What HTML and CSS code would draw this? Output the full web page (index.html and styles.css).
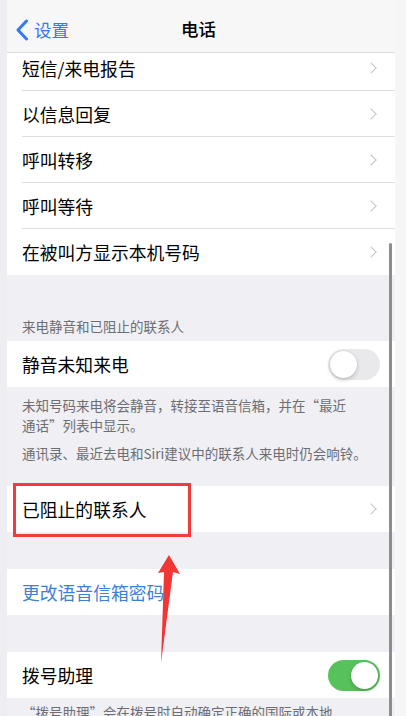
FILE: index.html
```html
<!DOCTYPE html>
<html lang="zh-CN">
<head>
<meta charset="utf-8">
<title>电话</title>
<link rel="stylesheet" href="styles.css">
</head>
<body>
<div class="page">
  <header class="nav">
    <a class="back">
      <svg class="back-icon" width="14" height="22" viewBox="0 0 14 22"><path d="M11.5 2 L3 11 L11.5 20" fill="none" stroke="#3478f6" stroke-width="3" stroke-linecap="round" stroke-linejoin="round"/></svg>
      <span>设置</span>
    </a>
    <h1 class="title">电话</h1>
  </header>

  <section class="group first">
    <div class="row"><span class="label">短信/来电报告</span><i class="chev"></i></div>
    <div class="row"><span class="label">以信息回复</span><i class="chev"></i></div>
    <div class="row"><span class="label">呼叫转移</span><i class="chev"></i></div>
    <div class="row"><span class="label">呼叫等待</span><i class="chev"></i></div>
    <div class="row last"><span class="label">在被叫方显示本机号码</span><i class="chev"></i></div>
  </section>

  <div class="section-head">来电静音和已阻止的联系人</div>
  <section class="group">
    <div class="row last"><span class="label">静音未知来电</span><span class="switch"><span class="knob"></span></span></div>
  </section>
  <div class="section-foot">
    <p>未知号码来电将会静音，转接至语音信箱，并在“最近<br>通话”列表中显示。</p>
    <p>通讯录、最近去电和Siri建议中的联系人来电时仍会响铃。</p>
  </div>

  <section class="group">
    <div class="row last"><span class="label">已阻止的联系人</span><i class="chev"></i></div>
  </section>

  <div class="gap"></div>
  <section class="group">
    <div class="row last"><span class="label link">更改语音信箱密码</span></div>
  </section>

  <div class="gap"></div>
  <section class="group">
    <div class="row last"><span class="label">拨号助理</span><span class="switch on"><span class="knob"></span></span></div>
  </section>
  <div class="section-foot tail">
    <p>“拨号助理”会在拨号时自动确定正确的国际或本地</p>
  </div>

  <div class="scrollbar"></div>
  <div class="highlight"></div>
  <svg class="arrow" width="40" height="120" viewBox="0 0 40 120">
    <polygon points="20,0 31,19 24,17 12,108 15,17 9,18" fill="#f23535"/>
  </svg>
</div>
</body>
</html>
```

FILE: styles.css
```css
* { box-sizing: border-box; }

html, body {
  margin: 0;
  padding: 0;
  height: 716px;
  overflow: hidden;
  background: #f6f6f8;
}

body {
  font-family: "Noto Sans CJK SC", "Noto Sans", sans-serif;
  color: #000;
}

.page {
  position: relative;
  width: 395px;
  height: 716px;
  border-left: 7px solid #eeeef2;
  background: #efeff4;
  overflow: hidden;
}

/* navigation bar floats over the scrolled list */
.nav {
  position: sticky;
  top: 0;
  z-index: 2;
  height: 53px;
  display: flex;
  align-items: center;
  justify-content: center;
  background: #f7f7f8;
  border-bottom: 1px solid #dcdce0;
}

.back {
  position: absolute;
  left: 8px;
  top: 19px;
  display: flex;
  align-items: center;
  gap: 5px;
  color: #3478f6;
  font-size: 17.5px;
  line-height: 22px;
}

.back-icon { display: block; }

.title {
  margin: 0;
  font-size: 17.5px;
  font-weight: 500;
  line-height: 22px;
  margin-left: -5px;
  margin-top: 6px;
}

.group {
  background: #fff;
}

.group.first {
  margin-top: -8px;
}

.row {
  height: 46px;
  margin-left: 15px;
  padding-right: 16px;
  display: flex;
  align-items: center;
  justify-content: space-between;
  border-bottom: 1px solid #dedee2;
}

.row.last {
  border-bottom: none;
}

.label {
  font-size: 17.8px;
  line-height: 24px;
}

.label.link {
  color: #3d80da;
}

.chev {
  width: 8px;
  height: 8px;
  border-top: 1.6px solid #c4c4c8;
  border-right: 1.6px solid #c4c4c8;
  transform: rotate(45deg);
  margin-right: 4px;
}

.section-head {
  height: 66px;
  padding: 0 0 6px 15px;
  display: flex;
  align-items: flex-end;
  font-size: 13.5px;
  line-height: 18px;
  color: #6d6d72;
}

.section-foot {
  padding: 8px 15px 23px 15px;
  font-size: 13.5px;
  line-height: 20px;
  color: #6d6d72;
}

.section-foot p {
  margin: 0 0 8px 0;
}

.section-foot p:last-child {
  margin-bottom: 0;
}

.section-foot.tail {
  padding-top: 4px;
}

.gap {
  height: 37px;
}

.switch {
  position: relative;
  width: 52px;
  height: 31px;
  border-radius: 16px;
  background: #e9e9eb;
  margin-right: -1px;
}

.switch .knob {
  position: absolute;
  top: 2px;
  left: 2px;
  width: 27px;
  height: 27px;
  border-radius: 50%;
  background: #fff;
  box-shadow: 0 2px 4px rgba(0,0,0,0.18), 0 0 0 0.5px rgba(0,0,0,0.06);
}

.switch.on {
  background: #57c25b;
}

.switch.on .knob {
  left: 23px;
}

/* scroll indicator */
.scrollbar {
  position: absolute;
  left: 382px;
  top: 243px;
  width: 3px;
  height: 480px;
  border-radius: 2px;
  background: #8d8d8f;
}

/* annotation overlay */
.highlight {
  position: absolute;
  left: 6px;
  top: 483px;
  width: 178px;
  height: 54px;
  border: 3px solid #f23b3b;
}

.arrow {
  position: absolute;
  left: 142px;
  top: 555px;
}
```
